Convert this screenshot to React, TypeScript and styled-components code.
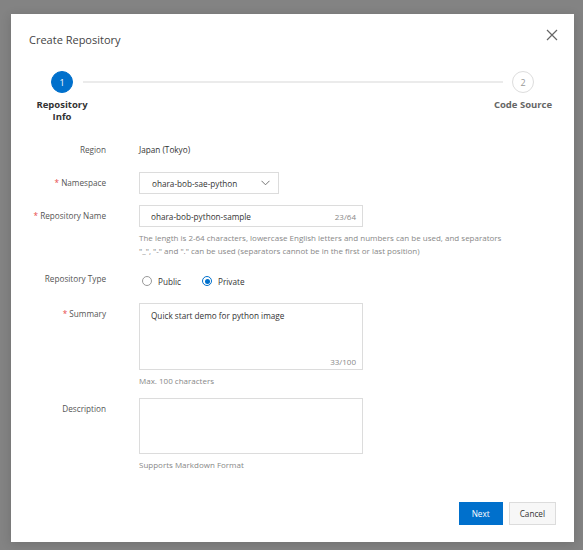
import React from 'react';
import styled, { createGlobalStyle } from 'styled-components';

const GlobalStyle = createGlobalStyle`
  html, body {
    margin: 0;
    padding: 0;
    background: #838383;
  }
  body {
    font-family: 'Segoe UI', 'Open Sans', sans-serif;
    color: #333;
  }
`;

const BLUE = '#0070cc';

const Backdrop = styled.div`
  width: 583px;
  height: 550px;
  box-sizing: border-box;
  padding: 14px 9px 8px 11px;
  background: #838383;
`;

const Dialog = styled.div`
  width: 563px;
  height: 528px;
  background: #fff;
  display: flex;
  flex-direction: column;
  box-sizing: border-box;
  box-shadow: 0 2px 10px rgba(0, 0, 0, 0.15);
`;

const Header = styled.div`
  display: flex;
  justify-content: space-between;
  align-items: flex-start;
  padding: 18px 18px 0 18px;
`;

const Title = styled.h2`
  margin: 0;
  font-size: 11px;
  line-height: 16px;
  font-weight: 400;
  color: #444;
`;

const CloseButton = styled.button`
  border: none;
  background: none;
  padding: 0;
  margin-top: -3px;
  margin-right: -2px;
  width: 12px;
  height: 12px;
  display: flex;
  cursor: pointer;
`;

const Steps = styled.div`
  display: grid;
  grid-template-columns: 62px 1fr 62px;
  padding: 0 20px;
  margin-top: 23px;
`;

const Step = styled.div`
  display: flex;
  flex-direction: column;
  align-items: center;
`;

const StepCircle = styled.div<{ $active?: boolean }>`
  width: 22px;
  height: 22px;
  box-sizing: border-box;
  border-radius: 50%;
  display: flex;
  align-items: center;
  justify-content: center;
  font-size: 9px;
  background: ${(p) => (p.$active ? BLUE : '#fff')};
  color: ${(p) => (p.$active ? '#fff' : '#999')};
  border: 1px solid ${(p) => (p.$active ? BLUE : '#ddd')};
`;

const StepLabel = styled.div<{ $active?: boolean }>`
  margin-top: 6px;
  font-size: 9.5px;
  line-height: 12px;
  font-weight: 700;
  text-align: center;
  color: ${(p) => (p.$active ? '#333' : '#666')};
`;

const Connector = styled.div`
  height: 2px;
  background: #ebebeb;
  margin: 10px -11px 0 -10px;
`;

const Form = styled.div`
  display: flex;
  flex-direction: column;
  gap: 11px;
  margin-top: 16px;
`;

const Row = styled.div`
  display: grid;
  grid-template-columns: 95px 224px;
  column-gap: 33px;
`;

const Label = styled.div<{ $required?: boolean }>`
  text-align: right;
  font-size: 8.2px;
  line-height: 22px;
  color: #555;
  &::before {
    content: ${(p) => (p.$required ? "'* '" : "''")};
    color: #e84b4b;
  }
`;

const Value = styled.div`
  font-size: 8.2px;
  line-height: 22px;
  color: #333;
`;

const Field = styled.div`
  display: flex;
  flex-direction: column;
`;

const Select = styled.div`
  width: 140px;
  height: 22px;
  box-sizing: border-box;
  border: 1px solid #dcdcdc;
  display: flex;
  align-items: center;
  justify-content: space-between;
  padding: 0 8px 0 12px;
  font-size: 8.2px;
  color: #333;
`;

const InputBox = styled.div`
  position: relative;
  height: 22px;
  box-sizing: border-box;
  border: 1px solid #dcdcdc;
  display: flex;
  align-items: center;
`;

const TextInput = styled.input`
  flex: 1;
  border: none;
  outline: none;
  background: transparent;
  padding: 0 0 0 11px;
  font-family: inherit;
  font-size: 8.2px;
  color: #333;
  min-width: 0;
`;

const Counter = styled.span`
  font-size: 8px;
  color: #888;
  padding-right: 6px;
`;

const AreaBox = styled.div<{ $height: number }>`
  position: relative;
  height: ${(p) => p.$height}px;
  box-sizing: border-box;
  border: 1px solid #dcdcdc;
`;

const TextArea = styled.textarea`
  width: 100%;
  height: 100%;
  box-sizing: border-box;
  border: none;
  outline: none;
  resize: none;
  padding: 5px 11px;
  font-family: inherit;
  font-size: 8.2px;
  line-height: 13px;
  color: #333;
  background: transparent;
`;

const AreaCounter = styled.span`
  position: absolute;
  right: 6px;
  bottom: 2px;
  font-size: 8px;
  color: #888;
`;

const Help = styled.div`
  margin-top: 4px;
  font-size: 8px;
  line-height: 13px;
  color: #888;
  width: 368px;
`;

const RadioGroup = styled.div`
  display: flex;
  align-items: center;
  gap: 18px;
  height: 22px;
  margin-top: 2px;
`;

const RadioOption = styled.label`
  display: flex;
  align-items: center;
  gap: 6px;
  font-size: 8.2px;
  color: #333;
`;

const RadioDot = styled.span<{ $checked?: boolean }>`
  width: 10px;
  height: 10px;
  box-sizing: border-box;
  border-radius: 50%;
  border: 1px solid ${(p) => (p.$checked ? BLUE : '#999')};
  display: flex;
  align-items: center;
  justify-content: center;
  margin-left: 3px;
  &::after {
    content: '';
    width: 5px;
    height: 5px;
    border-radius: 50%;
    background: ${(p) => (p.$checked ? BLUE : 'transparent')};
  }
`;

const Footer = styled.div`
  margin-top: auto;
  display: flex;
  justify-content: flex-end;
  gap: 6px;
  padding: 0 18px 17px 0;
`;

const Button = styled.button<{ $primary?: boolean }>`
  height: 23px;
  box-sizing: border-box;
  padding: 0 ${(p) => (p.$primary ? 12 : 10)}px;
  font-family: inherit;
  font-size: 8.2px;
  border: 1px solid ${(p) => (p.$primary ? BLUE : '#dcdcdc')};
  background: ${(p) => (p.$primary ? BLUE : '#f7f7f7')};
  color: ${(p) => (p.$primary ? '#fff' : '#333')};
  cursor: pointer;
`;

const Chevron = () => (
  <svg width="9" height="6" viewBox="0 0 9 6" fill="none">
    <path d="M0.5 0.8 L4.5 4.8 L8.5 0.8" stroke="#666" strokeWidth="0.9" />
  </svg>
);

const CloseIcon = () => (
  <svg width="12" height="12" viewBox="0 0 12 12" fill="none">
    <path d="M1 1 L11 11 M11 1 L1 11" stroke="#666" strokeWidth="1.2" />
  </svg>
);

const App = () => {
  return (
    <Backdrop>
      <GlobalStyle />
      <Dialog>
        <Header>
          <Title>Create Repository</Title>
          <CloseButton aria-label="Close">
            <CloseIcon />
          </CloseButton>
        </Header>

        <Steps>
          <Step>
            <StepCircle $active>1</StepCircle>
            <StepLabel $active>Repository Info</StepLabel>
          </Step>
          <Connector />
          <Step>
            <StepCircle>2</StepCircle>
            <StepLabel>Code Source</StepLabel>
          </Step>
        </Steps>

        <Form>
          <Row>
            <Label>Region</Label>
            <Value>Japan (Tokyo)</Value>
          </Row>

          <Row>
            <Label $required>Namespace</Label>
            <Select>
              <span>ohara-bob-sae-python</span>
              <Chevron />
            </Select>
          </Row>

          <Row>
            <Label $required>Repository Name</Label>
            <Field>
              <InputBox>
                <TextInput readOnly value="ohara-bob-python-sample" />
                <Counter>23/64</Counter>
              </InputBox>
              <Help>
                The length is 2-64 characters, lowercase English letters and numbers can be used, and separators
                "_", "-" and "." can be used (separators cannot be in the first or last position)
              </Help>
            </Field>
          </Row>

          <Row>
            <Label>Repository Type</Label>
            <RadioGroup>
              <RadioOption>
                <RadioDot />
                Public
              </RadioOption>
              <RadioOption>
                <RadioDot $checked />
                Private
              </RadioOption>
            </RadioGroup>
          </Row>

          <Row>
            <Label $required>Summary</Label>
            <Field>
              <AreaBox $height={67}>
                <TextArea readOnly value="Quick start demo for python image" />
                <AreaCounter>33/100</AreaCounter>
              </AreaBox>
              <Help>Max. 100 characters</Help>
            </Field>
          </Row>

          <Row>
            <Label>Description</Label>
            <Field>
              <AreaBox $height={56}>
                <TextArea readOnly value="" />
              </AreaBox>
              <Help>Supports Markdown Format</Help>
            </Field>
          </Row>
        </Form>

        <Footer>
          <Button $primary>Next</Button>
          <Button>Cancel</Button>
        </Footer>
      </Dialog>
    </Backdrop>
  );
};

export default App;
